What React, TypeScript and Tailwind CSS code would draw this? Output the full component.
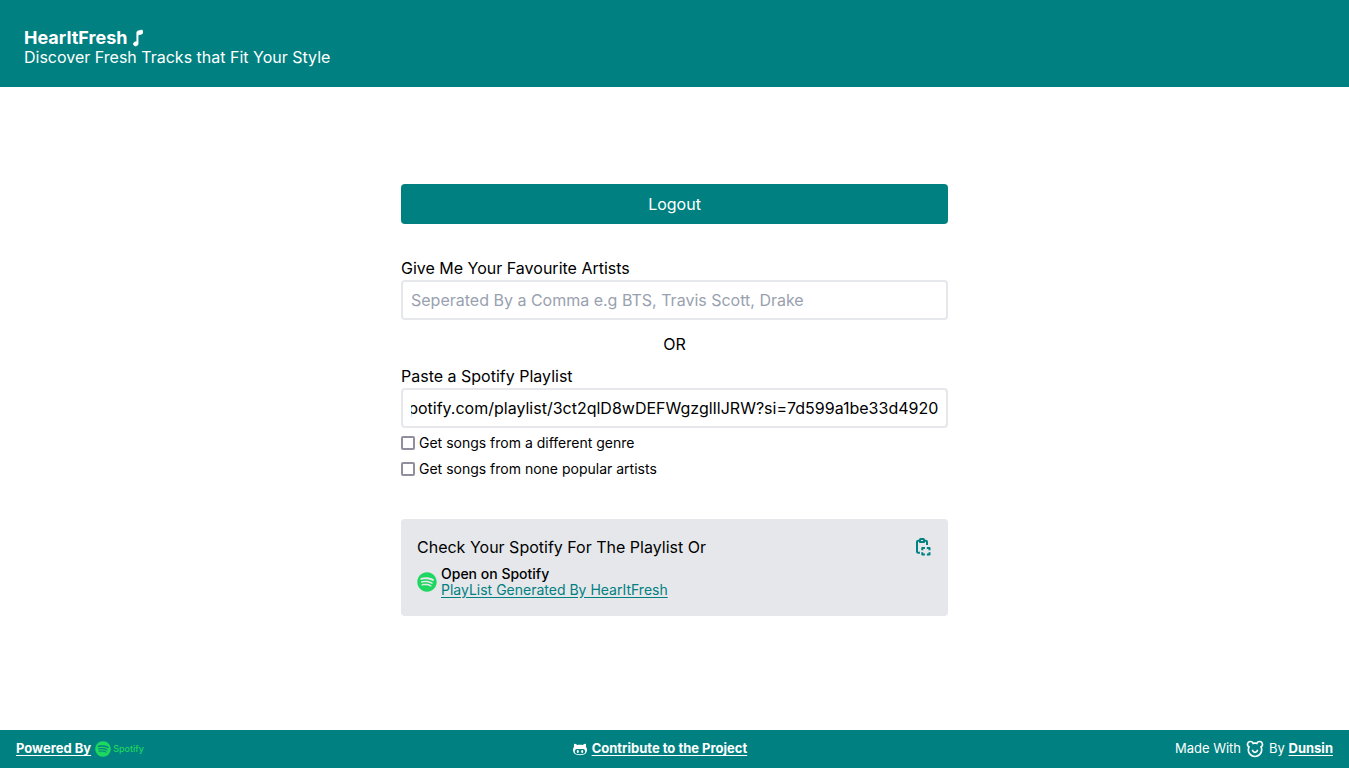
import { useEffect, useRef } from 'react';
import { IoMusicalNote } from 'react-icons/io5';
import { FaSpotify } from 'react-icons/fa';
import { VscOctoface } from 'react-icons/vsc';
import { RiBearSmileLine } from 'react-icons/ri';

const PLAYLIST = 'https://open.spotify.com/playlist/3ct2qlD8wDEFWgzglIlJRW?si=7d599a1be33d4920';

function Option({ id, label }: { id: string; label: string }) {
  return (
    <div className="flex items-center gap-1">
      <input
        id={id}
        type="checkbox"
        className="size-3.5 shrink-0 appearance-none rounded-xs border-2 border-[#8f8f9d] bg-white checked:bg-[#008080]"
      />
      <label htmlFor={id} className="text-sm leading-5">{label}</label>
    </div>
  );
}

function ClipboardCopyIcon() {
  return (
    <svg
      viewBox="0 0 24 24"
      className="size-5"
      fill="none"
      stroke="currentColor"
      strokeWidth="2.4"
      strokeLinejoin="round"
      aria-hidden="true"
    >
      <path d="M9 4.500H7.500A1.500 1.500 0 0 0 6 6v11.500A1.500 1.500 0 0 0 7.500 19H9.500" />
      <path d="M15 4.500h1.500a1.500 1.500 0 0 1 1.500 1.500v3.500" />
      <path d="M9.500 3.500a1 1 0 0 1 1-1h3a1 1 0 0 1 1 1v2.500h-5z" />
      <path d="M12.300 16v-2.800h3.200M17.800 13.200h3.200V16M21 18.300v2.800h-3.200M15.500 21.100h-3.200v-2.800" />
    </svg>
  );
}

export default function App() {
  const playlist = useRef<HTMLInputElement>(null);

  useEffect(() => {
    const field = playlist.current;
    if (field) field.scrollLeft = field.scrollWidth;
  }, []);

  return (
    <div className="flex min-h-screen flex-col bg-white font-['Inter','Liberation_Sans',sans-serif] text-base text-black">
      <header className="bg-[#008080] px-6 pt-[29px] pb-5 text-white">
        <h1 className="flex items-center gap-0.5 text-lg leading-[18px] font-bold">
          HearItFresh
          <IoMusicalNote size={18} strokeWidth={24} aria-hidden="true" />
        </h1>
        <p className="leading-5">Discover Fresh Tracks that Fit Your Style</p>
      </header>

      <main className="flex flex-1 flex-col items-center justify-center px-4 pb-[18px]">
        <div className="w-full max-w-[547px]">
          <button type="button" className="h-10 w-full rounded bg-[#008080] text-white">Logout</button>

          <form className="mt-8 flex flex-col">
            <label htmlFor="artists" className="leading-6">Give Me Your Favourite Artists</label>
            <input
              id="artists"
              type="text"
              placeholder="Seperated By a Comma e.g BTS, Travis Scott, Drake"
              className="h-10 w-full rounded border-2 border-gray-200 px-2 placeholder:text-gray-400"
            />
            <p className="mt-3 mb-2 text-center leading-6">OR</p>
            <label htmlFor="playlist" className="leading-6">Paste a Spotify Playlist</label>
            <input
              id="playlist"
              ref={playlist}
              type="text"
              defaultValue={PLAYLIST}
              className="h-10 w-full rounded border-2 border-gray-200 px-2"
            />
            <div className="mt-[5px] flex flex-col gap-1.5">
              <Option id="genre" label="Get songs from a different genre" />
              <Option id="popular" label="Get songs from none popular artists" />
            </div>
          </form>

          <section className="mt-10 rounded bg-gray-200 px-4 pt-4 pb-[18px]">
            <div className="flex items-center justify-between">
              <p className="leading-6">Check Your Spotify For The Playlist Or</p>
              <button type="button" aria-label="Copy playlist link" className="text-[#008080]">
                <ClipboardCopyIcon />
              </button>
            </div>
            <div className="mt-[7px] flex items-center gap-1 text-sm leading-4">
              <FaSpotify size={20} className="text-[#1ed760]" aria-hidden="true" />
              <div>
                <p className="font-medium">Open on Spotify</p>
                <a href="#playlist" className="text-[#008080] underline underline-offset-2">PlayList Generated By HearItFresh</a>
              </div>
            </div>
          </section>
        </div>
      </main>

      <footer className="flex h-[38px] items-center justify-between bg-[#008080] px-4 text-[13px] text-white">
        <div className="flex items-center gap-1">
          <a href="#powered" className="font-bold underline underline-offset-2">Powered By</a>
          <span className="flex items-center gap-0.5 text-[9px] font-medium text-[#1ed760]">
            <FaSpotify size={16} aria-hidden="true" />
            Spotify
          </span>
        </div>
        <div className="flex items-center gap-1">
          <VscOctoface size={16} aria-hidden="true" />
          <a href="#contribute" className="font-bold underline underline-offset-2">Contribute to the Project</a>
        </div>
        <div className="flex items-center gap-1">
          Made With
          <RiBearSmileLine size={20} aria-label="love" />
          <span>By <a href="#dunsin" className="font-bold underline underline-offset-2">Dunsin</a></span>
        </div>
      </footer>
    </div>
  );
}
